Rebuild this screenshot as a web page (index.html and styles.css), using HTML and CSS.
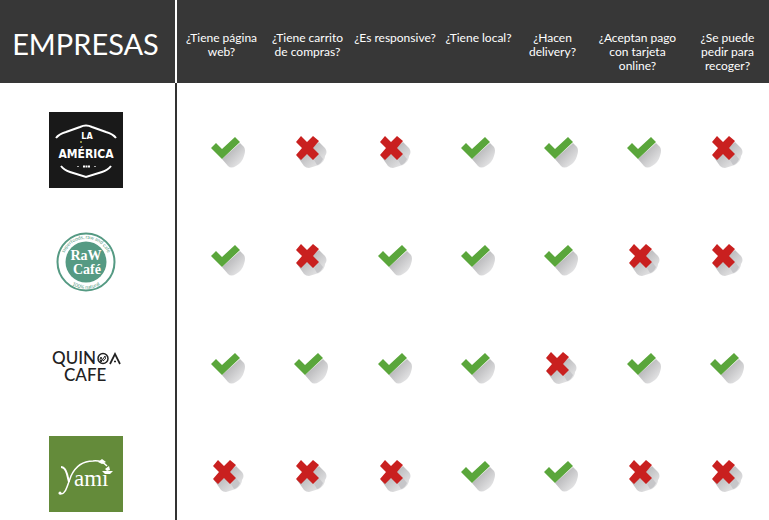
FILE: index.html
```html
<!DOCTYPE html>
<html lang="es">
<head>
<meta charset="utf-8">
<title>Empresas</title>
<link rel="stylesheet" href="styles.css">
</head>
<body>
<svg class="defs" aria-hidden="true">
  <defs>
    <linearGradient id="shade" x1="0" y1="0" x2="1" y2="1">
      <stop offset="0.35" stop-color="#bcbcbe"/>
      <stop offset="0.95" stop-color="#eeeeef"/>
    </linearGradient>
    <symbol id="yes" viewBox="0 0 34 34">
      <path d="M11 23 29 7 33 11Q35 14 33 20Q31 27 25 30Q20 33 17 30Z" fill="url(#shade)"/>
      <path d="M0 12 5 7 11 13 24 1 29 6 11 23Z" fill="#5aa63b"/>
    </symbol>
    <symbol id="no" viewBox="0 0 34 34">
      <path d="M25 6 31 12Q34 16 31 20Q31 25 25 29L15 32Q12 32 10 30L3 20 20 10Z" fill="url(#shade)"/>
      <path d="M20 24 25 18 29 23Q27 28 23 29Z" fill="#c6c6c9"/>
      <path d="M7 0 13 6 19 0 25 5 19 12 25 18 19 24 13 18 7 24 2 19 8 12 2 6Z" fill="#c9201f"/>
    </symbol>
  </defs>
</svg>
<table class="compare">
  <thead>
    <tr class="head">
      <th class="title" scope="col">EMPRESAS</th>
      <th scope="col">¿Tiene página<br>web?</th>
      <th scope="col">¿Tiene carrito<br>de compras?</th>
      <th scope="col">¿Es responsive?</th>
      <th scope="col">¿Tiene local?</th>
      <th scope="col">¿Hacen<br>delivery?</th>
      <th scope="col">¿Aceptan pago<br>con tarjeta<br>online?</th>
      <th scope="col">¿Se puede<br>pedir para<br>recoger?</th>
    </tr>
  </thead>
  <tbody>
    <tr class="row">
      <th class="brand" scope="row">
        <svg class="logo" viewBox="0 0 74 76" role="img" aria-label="La América">
          <rect width="74" height="76" fill="#191919"/>
          <path d="M7 26Q10 22 17 20L31 15Q37 12 43 15L57 20Q64 22 67 26M12 54Q15 58 21 60L37 65 53 60Q59 58 62 54" fill="none" stroke="#fff" stroke-width="2"/>
          <text class="america-small" x="38" y="27">LA</text>
          <text class="america" x="37" y="46">AMÉRICA</text>
          <circle cx="32" cy="30" r="1" fill="#b9b44c"/>
          <path d="M28 54.500H30M45 54.500H47" stroke="#aaa"/>
          <path d="M34 54.500H41" stroke="#fff" stroke-width="2" stroke-dasharray="2 .5"/>
        </svg>
      </th>
      <td><svg class="mark" role="img" aria-label="Sí"><use href="#yes"/></svg></td>
      <td><svg class="mark" role="img" aria-label="No"><use href="#no"/></svg></td>
      <td><svg class="mark" role="img" aria-label="No"><use href="#no"/></svg></td>
      <td><svg class="mark" role="img" aria-label="Sí"><use href="#yes"/></svg></td>
      <td><svg class="mark" role="img" aria-label="Sí"><use href="#yes"/></svg></td>
      <td><svg class="mark" role="img" aria-label="Sí"><use href="#yes"/></svg></td>
      <td><svg class="mark" role="img" aria-label="No"><use href="#no"/></svg></td>
    </tr>
    <tr class="row">
      <th class="brand" scope="row">
        <svg class="logo" viewBox="0 0 74 76" role="img" aria-label="Raw Café">
          <circle cx="37" cy="42" r="28.500" fill="#fff" stroke="#559a83" stroke-width="2"/>
          <circle cx="37" cy="42" r="20.500" fill="#559a83"/>
          <path id="arc-top" d="M14 47A23.500 23.500 0 1 1 60 47" fill="none"/>
          <path id="arc-bottom" d="M18 61A27 27 0 0 0 56 61" fill="none"/>
          <text class="ring"><textPath href="#arc-top" startOffset="50%">superfoods, raw and café</textPath></text>
          <text class="ring"><textPath href="#arc-bottom" startOffset="50%">100% natural</textPath></text>
          <text class="raw" x="37" y="40">RaW</text>
          <text class="raw" x="38" y="54">Café</text>
        </svg>
      </th>
      <td><svg class="mark" role="img" aria-label="Sí"><use href="#yes"/></svg></td>
      <td><svg class="mark" role="img" aria-label="No"><use href="#no"/></svg></td>
      <td><svg class="mark" role="img" aria-label="Sí"><use href="#yes"/></svg></td>
      <td><svg class="mark" role="img" aria-label="Sí"><use href="#yes"/></svg></td>
      <td><svg class="mark" role="img" aria-label="Sí"><use href="#yes"/></svg></td>
      <td><svg class="mark" role="img" aria-label="No"><use href="#no"/></svg></td>
      <td><svg class="mark" role="img" aria-label="No"><use href="#no"/></svg></td>
    </tr>
    <tr class="row">
      <th class="brand" scope="row">
        <svg class="logo" viewBox="0 0 74 76" role="img" aria-label="Quinoa Cafe">
          <text class="quinoa" x="3" y="36">QUIN</text>
          <circle cx="54" cy="30.500" r="5" fill="none" stroke="#222" stroke-width="1.500"/>
          <path d="M52 34Q50 31 52 29Q54 31 52 34L56 28Q58 31 54 33" fill="none" stroke="#222"/>
          <path d="M61 36 66 26 71 36" fill="none" stroke="#222" stroke-width="1.700"/>
          <path d="M65 33.500H67" stroke="#222" stroke-width="1.500"/>
          <text class="quinoa" x="15" y="53">CAFE</text>
        </svg>
      </th>
      <td><svg class="mark" role="img" aria-label="Sí"><use href="#yes"/></svg></td>
      <td><svg class="mark" role="img" aria-label="Sí"><use href="#yes"/></svg></td>
      <td><svg class="mark" role="img" aria-label="Sí"><use href="#yes"/></svg></td>
      <td><svg class="mark" role="img" aria-label="Sí"><use href="#yes"/></svg></td>
      <td><svg class="mark" role="img" aria-label="No"><use href="#no"/></svg></td>
      <td><svg class="mark" role="img" aria-label="Sí"><use href="#yes"/></svg></td>
      <td><svg class="mark" role="img" aria-label="Sí"><use href="#yes"/></svg></td>
    </tr>
    <tr class="row">
      <th class="brand" scope="row">
        <svg class="logo" viewBox="0 0 74 76" role="img" aria-label="Yami">
          <rect width="74" height="76" fill="#648b3a"/>
          <path d="M12 31Q16 31 18 38L20 46" fill="none" stroke="#fff" stroke-width="2"/>
          <path d="M10 57Q15 60 18 51L22 40Q29 25 44 25Q52 24 58 30" fill="none" stroke="#fff" stroke-width="1.500"/>
          <circle cx="11" cy="57" r="1.500" fill="#fff"/>
          <path d="M49 26 53 23 57 26 53 28ZM56 33 60 30 61 34 58 35ZM53 35H64L61 38H56Z" fill="#fff"/>
          <text class="yami" x="25" y="50">amı</text>
        </svg>
      </th>
      <td><svg class="mark" role="img" aria-label="No"><use href="#no"/></svg></td>
      <td><svg class="mark" role="img" aria-label="No"><use href="#no"/></svg></td>
      <td><svg class="mark" role="img" aria-label="No"><use href="#no"/></svg></td>
      <td><svg class="mark" role="img" aria-label="Sí"><use href="#yes"/></svg></td>
      <td><svg class="mark" role="img" aria-label="Sí"><use href="#yes"/></svg></td>
      <td><svg class="mark" role="img" aria-label="No"><use href="#no"/></svg></td>
      <td><svg class="mark" role="img" aria-label="No"><use href="#no"/></svg></td>
    </tr>
  </tbody>
</table>
</body>
</html>
```
FILE: styles.css
```css
* { box-sizing: border-box; }

body {
  margin: 0;
  background: #fff;
  font-family: Lato, "Liberation Sans", sans-serif;
}

.defs { position: absolute; width: 0; height: 0; }

.compare {
  display: flex;
  flex-direction: column;
  width: 100%;
  min-height: 100vh;
}

thead { display: block; }

tbody {
  display: flex;
  flex-direction: column;
  flex: 1;
}

th, td { padding: 0; }

th { font-weight: 400; }

.head {
  display: grid;
  grid-template-columns: 177fr 89fr 83fr 92fr 75fr 73fr 97fr 83fr;
  min-height: 83px;
  background: #373737;
  color: #fff;
  font-size: 12px;
  line-height: 14px;
  white-space: nowrap;
}

.head th { padding-top: 31px; }

.head .title {
  padding: 29px 4px 0 0;
  border-right: 2px solid #fff;
  font-size: 29px;
  line-height: 30px;
}

.row {
  display: grid;
  grid-template-columns: 177fr 92fr repeat(6, 83fr);
  min-height: 108px;
}

.row:last-child { flex: 1; }

.brand {
  padding: 29px 3px 0 0;
  border-right: 2px solid #333;
}

.row td {
  padding-top: 53px;
  text-align: center;
}

.row td:nth-child(2) { padding-left: 8px; }

.logo {
  display: block;
  width: 74px;
  height: 76px;
  margin: 0 auto;
}

.mark {
  display: block;
  width: 34px;
  height: 34px;
  margin: 0 auto;
}

.america, .america-small {
  fill: #fff;
  font-family: "DejaVu Sans Condensed", "Liberation Sans", sans-serif;
  font-weight: 700;
  text-anchor: middle;
}

.america { font-size: 12px; }

.america-small { font-size: 9px; }

.ring {
  fill: #559a83;
  font-size: 5px;
  text-anchor: middle;
}

.raw {
  fill: #fff;
  font-family: "Liberation Serif", serif;
  font-size: 14px;
  font-weight: 700;
  text-anchor: middle;
}

.quinoa {
  fill: #222;
  font-size: 17px;
  font-weight: 500;
}

.yami {
  fill: #fff;
  font-family: "Liberation Serif", serif;
  font-size: 23px;
}
```
